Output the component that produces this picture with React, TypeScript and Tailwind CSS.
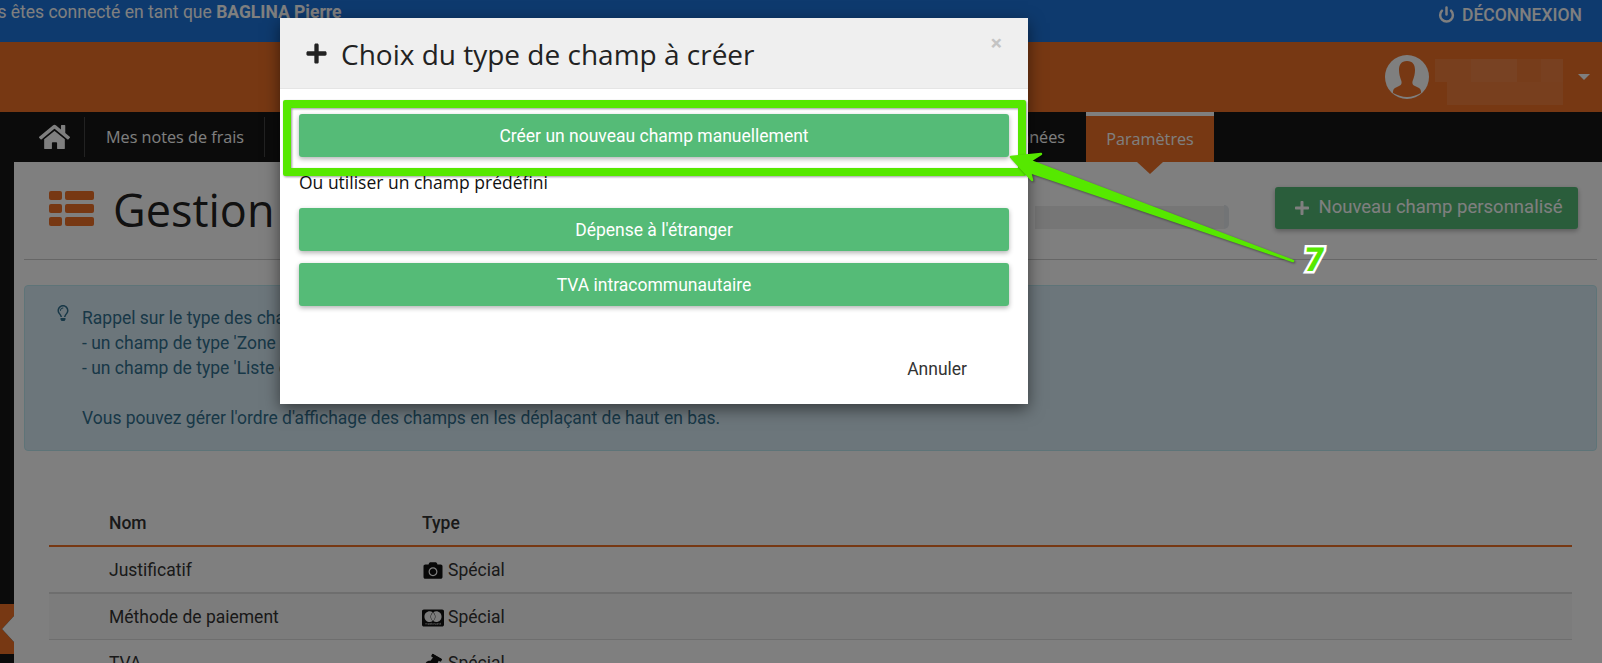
import { FaCamera, FaCcMastercard, FaHome, FaPlus, FaThumbtack, FaRegLightbulb } from 'react-icons/fa';
import { Power } from 'lucide-react';

const rows = [
  { name: 'Justificatif', icon: <FaCamera className="w-[22px] h-[19px]" />, line: 'h-[47px] pt-[1px] border-b-2 border-[#ddd]', bg: '' },
  { name: 'Méthode de paiement', icon: <FaCcMastercard className="w-[23px] h-[20px]" />, line: 'h-[46px] pt-[2px] border-b border-[#ddd]', bg: 'bg-[#f9f9f9]' },
  { name: 'TVA', icon: <FaThumbtack className="w-[18px] h-[18px] rotate-[30deg]" />, line: 'h-[47px]', bg: '' },
];

function Avatar() {
  return (
    <svg viewBox="0 0 44 44" className="w-11 h-11 shrink-0">
      <circle cx="22" cy="22" r="22" fill="#fff" />
      <path
        d="M22 6c-6 0-8 4-8 9 0 4 1 7 2 10 1 2 1 5-2 6l-4 2c-2 1-2 3-2 5 4 2 9 4 14 4s10-2 14-4c0-2 0-4-2-5l-4-2c-3-1-3-4-2-6 1-3 2-6 2-10 0-5-2-9-8-9z"
        fill="#ee7026"
      />
    </svg>
  );
}

function ListIcon() {
  return (
    <svg viewBox="0 0 46 36" className="w-[46px] h-[36px] shrink-0 fill-[#ee7026]">
      <rect x="0" y="0" width="13" height="9" rx="2" />
      <rect x="16" y="0" width="29" height="9" rx="2" />
      <rect x="0" y="13" width="13" height="9" rx="2" />
      <rect x="16" y="13" width="29" height="9" rx="2" />
      <rect x="0" y="26" width="13" height="9" rx="2" />
      <rect x="16" y="26" width="29" height="9" rx="2" />
    </svg>
  );
}

function ModalButton({ label }: { label: string }) {
  return (
    <button className="w-full h-[43px] pt-[1px] rounded-[3px] bg-[#55bb77] text-white text-[17.5px] shadow-[0_2px_5px_rgba(0,0,0,0.3)]">
      {label}
    </button>
  );
}

export default function App() {
  return (
    <div className="relative w-[1602px] h-[663px] overflow-hidden bg-white font-['Roboto',sans-serif] text-[17.5px] text-[#333]">
      <div className="h-[42px] bg-[#1c74dc] flex justify-between text-white">
        <div className="-ml-[33px] leading-[25px] whitespace-nowrap">
          Vous êtes connecté en tant que <b>BAGLINA Pierre</b>
        </div>
        <div className="flex items-start gap-[7px] pr-[20px] pt-[5px] font-medium">
          <Power className="w-[17px] h-[17px] mt-[1px]" strokeWidth={3.5} />
          <span className="leading-[20px]">DÉCONNEXION</span>
        </div>
      </div>

      <div className="h-[70px] bg-[#ee7026] flex items-center justify-end pr-[12px]">
        <Avatar />
        <div className="w-[128px] h-[46px] ml-[6px] mr-[15px] mt-[10px] flex flex-col">
          <div className="h-[23px] flex">
            <div className="w-[36px] bg-white/10" />
            <div className="w-[46px] bg-white/15" />
            <div className="w-[24px] bg-white/8" />
            <div className="w-[22px] bg-white/12" />
          </div>
          <div className="h-[23px] ml-[12px] bg-white/10" />
        </div>
        <div className="w-0 h-0 border-x-[6px] border-t-[6px] border-x-transparent border-t-white" />
      </div>

      <nav className="h-[50px] bg-[#161616] flex text-white font-['Open_Sans',sans-serif] text-[16.2px]">
        <div className="w-[85px] flex items-center">
          <div className="w-full h-[40px] flex items-center pl-[39px] border-r border-white/20">
            <FaHome className="w-[31px] h-[28px]" />
          </div>
        </div>
        <div className="w-[180px] flex items-center">
          <div className="w-full h-[40px] flex items-center pl-[21px] border-r border-white/20">Mes notes de frais</div>
        </div>
        <div className="w-[821px] flex items-center justify-end pr-[21px]">Données</div>
        <div className="relative w-[128px] bg-[#ee7026] border-t-4 border-white flex items-center justify-center">
          Paramètres
          <div className="absolute left-[51px] top-[46px] w-0 h-0 border-x-[13px] border-t-[12px] border-x-transparent border-t-[#ee7026]" />
        </div>
      </nav>

      <div className="flex h-[501px]">
        <div className="w-[14px] bg-[#161616] shrink-0" />
        <main className="flex-1 pl-[10px] pr-[5px]">
          <div className="h-[98px] border-b border-[#ccc] flex items-start pt-[25px] pl-[25px] pr-[19px]">
            <div className="mt-[4px]">
              <ListIcon />
            </div>
            <h1 className="ml-[18px] w-[921px] shrink-0 font-['Open_Sans',sans-serif] text-[45px] leading-[46px] text-[#222]">
              Gestion
            </h1>
            <div className="h-[36px] mt-[12px] w-[195px] border-l border-white flex items-center">
              <div className="h-[23px] w-[189px] bg-[#ededed]" />
              <div className="h-[24px] w-[5px] rounded-r-full bg-[#e4e8ec]" />
            </div>
            <button className="ml-auto h-[42px] w-[303px] pl-[4px] rounded-[3px] bg-[#55bb77] text-white text-[18.5px] flex items-center justify-center gap-[8px] shadow-[0_2px_5px_rgba(0,0,0,0.3)]">
              <FaPlus className="w-[16px] h-[16px]" />
              Nouveau champ personnalisé
            </button>
          </div>

          <div className="mt-[25px] h-[166px] flex rounded-[4px] border border-[#bce8f1] bg-[#d9edf7] text-[#31708f] pt-[20px] pl-[32px] leading-[25px]">
            <FaRegLightbulb className="w-[12px] h-[16px] mt-[-1px] mr-[13px] shrink-0" />
            <div>
              <div>Rappel sur le type des champs :</div>
              <div>- un champ de type 'Zone de texte'</div>
              <div>- un champ de type 'Liste déroulante'</div>
              <div className="h-[25px]" />
              <div>Vous pouvez gérer l'ordre d'affichage des champs en les déplaçant de haut en bas.</div>
            </div>
          </div>

          <div className="mt-[50px] ml-[25px] mr-[25px]">
            <div className="h-[46px] flex items-center border-b-2 border-[#ee7026] font-medium">
              <div className="w-[373px] pl-[60px]">Nom</div>
              <div>Type</div>
            </div>
            {rows.map((row) => (
              <div key={row.name} className={`flex items-center ${row.line} ${row.bg}`}>
                <div className="w-[373px] pl-[60px]">{row.name}</div>
                <div className="flex items-center gap-[4px]">
                  <span className="w-[22px] flex justify-center text-[#111]">{row.icon}</span>
                  Spécial
                </div>
              </div>
            ))}
          </div>
        </main>
      </div>

      <svg viewBox="0 0 14 50" className="absolute left-0 top-[604px] w-[14px] h-[50px]">
        <path d="M0 0h14v12L2 25l12 13v12H0z" fill="#ee7026" />
        <path d="M14 12L2 25l12 13z" fill="#fff" />
      </svg>

      <div className="absolute inset-0 bg-black/50" />

      <div className="absolute left-[280px] top-[18px] w-[748px] h-[386px] bg-white shadow-[0_5px_15px_rgba(0,0,0,0.5)]">
        <div className="relative h-[71px] bg-[#efefef] border-b border-[#e5e5e5] flex items-center pl-[25px] text-[#222]">
          <FaPlus className="w-[23px] h-[23px] shrink-0" />
          <h4 className="ml-[13px] mt-[1px] font-['Open_Sans',sans-serif] text-[28px]">Choix du type de champ à créer</h4>
          <span className="absolute right-[26px] top-[10px] text-[21px] font-bold text-[#c4c4c4]">×</span>
        </div>
        <div className="pl-[19px] pr-[19px] pt-[25px]">
          <ModalButton label="Créer un nouveau champ manuellement" />
          <p className="mt-[13px] mb-[14px] leading-[24px] text-[#111] font-['Open_Sans',sans-serif] text-[17.5px]">Ou utiliser un champ prédéfini</p>
          <ModalButton label="Dépense à l'étranger" />
          <div className="h-[12px]" />
          <ModalButton label="TVA intracommunautaire" />
          <div className="flex justify-end pr-[42px] pt-[50px] text-[#333]">Annuler</div>
        </div>
      </div>

      <div className="absolute left-[283px] top-[100px] w-[743px] h-[76px] border-[8px] border-[#56e800] rounded-[2px] drop-shadow-[1px_1px_1px_rgba(0,0,0,0.4)]" />

      <svg viewBox="0 0 1602 663" className="absolute inset-0 w-full h-full drop-shadow-[1px_1px_1px_rgba(0,0,0,0.45)]">
        <path
          d="M1011 157 L1041 154 L1030 161 L1293 261 L1030 172 L1032 180 Z"
          fill="#56e800"
          stroke="#56e800"
          strokeWidth="2.5"
          strokeLinejoin="round"
        />
      </svg>

      <div className="absolute left-[1305px] top-[243px] font-['Roboto',sans-serif] font-black text-[33px] leading-[34px] text-[#56e800] [-webkit-text-stroke:5px_white] [paint-order:stroke_fill] -skew-x-6">
        7
      </div>
    </div>
  );
}
